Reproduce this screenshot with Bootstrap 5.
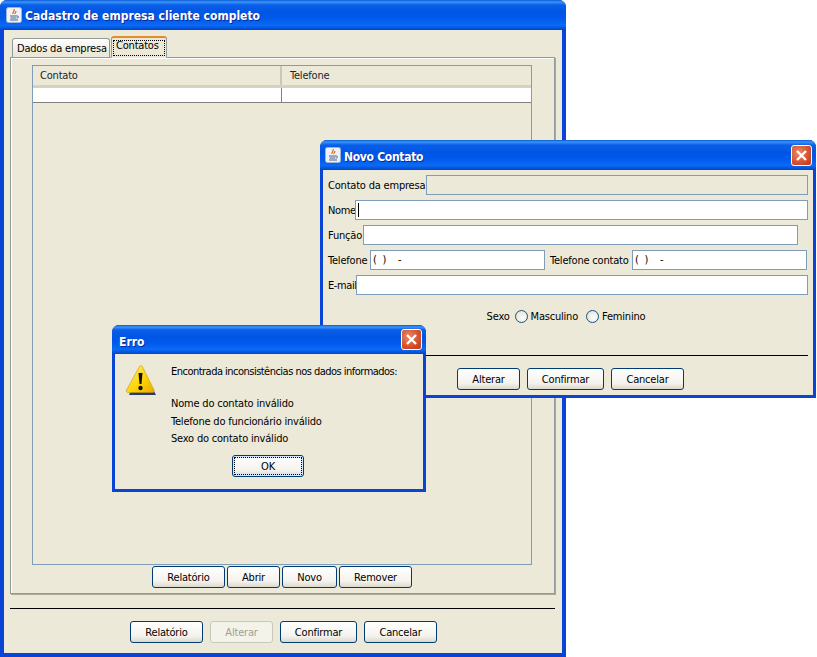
<!DOCTYPE html>
<html lang="pt"><head><meta charset="utf-8"><title>Cadastro</title>
<link href="https://cdn.jsdelivr.net/npm/bootstrap@5.3.0/dist/css/bootstrap.min.css" rel="stylesheet">
<style>
html,body{margin:0;background:#fff;width:817px;height:657px;overflow:hidden}
body{font-family:"DejaVu Sans Condensed","DejaVu Sans",sans-serif;font-stretch:condensed;font-size:11px;line-height:14px;color:#000;letter-spacing:-.2px}
.xpwin{position:absolute;display:flex;flex-direction:column;background:#ece9d8;border-radius:7px 7px 0 0;box-shadow:inset 0 0 0 1px #0831d9;overflow:hidden}
.win-main{left:0;top:0;width:566px;height:657px}
.win-novo{left:320px;top:140px;width:496px;height:258px}
.win-erro{left:112px;top:325px;width:314px;height:167px}
.xptitle{flex:none;display:flex;align-items:center;color:#fff;font:bold 12px/16px "DejaVu Sans Condensed","DejaVu Sans",sans-serif;font-stretch:condensed;letter-spacing:0;text-shadow:1px 1px 0 #0a2a9a;
 background:linear-gradient(180deg,#0a5ad8 0,#3b94f6 2px,#0a5fe8 5px,#0055e5 12px,#0058ea 60%,#0a6af5 85%,#0045c8 100%)}
.win-main .xptitle{height:30px;padding:0 4px 0 6px}
.win-novo .xptitle{height:30px;padding:0 4px 0 5px}
.win-erro .xptitle{height:29px;padding:0 4px 0 7px}
.ttxt{padding-top:3px}
.win-main .ttxt{padding-top:2px}
.win-erro .ttxt{padding-top:5px}
.win-novo .ttxt{letter-spacing:-.3px}
.xptitle svg{flex:none;margin-right:3px}
.xpclose{margin-left:auto;width:21px;height:21px;flex:none;border:1px solid #fff;border-radius:3px;background:radial-gradient(circle at 35% 35%,#e9896a,#d4502c 60%,#b8381c);display:flex;align-items:center;justify-content:center}
.xpclose svg{margin:0}
.xpbody{flex:1;min-height:0;display:flex;flex-direction:column;border:solid #0a44d6;border-width:0 3px 3px}
.win-main .xpbody{border-width:0 4px 4px}
.tabstrip{height:27px;flex:none;padding:0 0 0 8px;display:flex;align-items:flex-end;gap:1px;margin:0;list-style:none}
.tabitem{position:relative;height:19px;width:98px;padding:3px 0 0 4px;white-space:nowrap;background:linear-gradient(#fff,#ece9d8 80%);border:1px solid #919b9c;border-bottom:0;border-radius:3px 3px 0 0}
.tabitem.on{height:22px;width:56px;padding:2px 0 0 1px;background:#ece9d8;border-top:2px solid #e68b2c;margin-bottom:-1px;z-index:2;border-bottom:1px solid #ece9d8}
.tabitem.on span{display:block;width:52px;outline:1px dotted #000;outline-offset:-1px;padding:0 0 0 3px;height:16px;line-height:12px}
.tabpanel{flex:none;margin-left:6px;width:545px;height:537px;border:1px solid #919b9c;box-shadow:1px 1px 0 #aca899,inset 1px 1px 0 #fff;padding:7px 0 0 21px;display:flex;flex-direction:column}
.tblbox{width:500px;height:500px;flex:none;border:1px solid #7f9db9;background:#ece9d8;margin-bottom:1px}
table.jtable{width:498px;margin:0;border-collapse:collapse;table-layout:fixed;font-size:11px}
.jtable th{font-weight:400;height:20px;padding:2px 0 1px 7px;background:#ece9d8;border-bottom:3px solid #d6d2c2;border-right:2px solid #cbc7b8;vertical-align:middle}
.jtable th:first-child{width:248px}
.jtable th:last-child{border-right:0;padding-left:8px}
.jtable td{height:16px;padding:0;background:#fff;border-bottom:1px solid #808080;border-right:1px solid #808080}
.jtable td:last-child{border-right:0}
.btnrow{display:flex;justify-content:center}
.btn.jbtn{flex:none;height:22px;padding:1px 0 0;font-size:11px;letter-spacing:-.2px;line-height:19px;color:#000;border:1px solid #003c74;border-radius:3px;background:linear-gradient(#fff,#f4f3ee 70%,#dcd8cc)}
.btn.jbtn:disabled{opacity:1;color:#a19f91;border-color:#c9c7ba;background:#f4f3ea}
.btn.jbtn.def{outline:1px dotted #000;outline-offset:-3px;box-shadow:inset 0 0 0 2px #cee7ff}
.rule{height:1px;background:#000;flex:none;opacity:1;border:0;margin:0}
.fld{height:20px;background:#fff;border:1px solid #7f9db9;line-height:17px;padding-left:2px;white-space:pre;flex:none;color:#000}
.fld.ro{background:#ece9d8}
.caret{display:inline-block;width:1px;height:14px;background:#000;margin:2px 0 0 0;vertical-align:top}
.frm{padding:5px 5px 0 5px;display:flex;flex-direction:column;gap:5px}
.frow{display:flex;align-items:center;height:20px;white-space:nowrap}
.frow>span{padding-top:1px}
.radio{display:inline-block;flex:none;width:13px;height:13px;border:1px solid #1c5180;border-radius:50%;background:radial-gradient(circle at 60% 60%,#fff,#dcd9cd);margin:-2px 3px 0 5px}
.erro-body{padding:11px 0 0 56px;position:relative}
.warn{position:absolute;left:10px;top:10px}
.w73{width:73px}.w53{width:53px}.w55{width:55px}.w63{width:63px}.w77{width:77px}.w72{width:72px}
.r1{margin:14px 7px 0 6px}
.b1{width:500px;gap:2px}
.b2{margin-top:12px;gap:7px;margin-left:126px;justify-content:flex-start}
.l1{width:98px}.f1{width:382px}.l2{width:27px;letter-spacing:-.4px}.f2{width:453px}.l3{width:35px}.f3{width:435px}
.l4{width:42px}.f4{width:175px}.l5{width:82px;margin-left:5px}.l6{width:28px;letter-spacing:-.4px}.f6{width:452px}
.sexo{margin-top:12px;padding-right:4px}.r2{margin-left:8px}
.r3{margin:28px 5px 0 3px}
.b3{margin-top:12px;gap:7px;margin-left:134px;justify-content:flex-start}
.m1{letter-spacing:-.52px}
.m2{margin-top:18px}.m3{margin-top:3.500px}
.ok{margin-top:9px;padding-right:2px}
</style></head><body>

<section class="xpwin win-main">
 <div class="xptitle"><svg width="16" height="16" viewBox="0 0 16 16"><rect x=".5" y=".5" width="15" height="15" rx="2" fill="#eef1f6" stroke="#9db4d8"/><path d="M8 2c1.500 2-2 3-1 5M10 4c0 1.500-1.500 2-1 3" stroke="#e8661a" stroke-width="1.200" fill="none"/><path d="M4 9h7M4.500 11h6M4 13h8M11 9c2 0 2 2 0 2" stroke="#47648c" fill="none"/></svg><span class="ttxt">Cadastro de empresa cliente completo</span></div>
 <div class="xpbody">
  <ul class="tabstrip">
   <li class="tabitem">Dados da empresa</li>
   <li class="tabitem on"><span>Contatos</span></li>
  </ul>
  <div class="tabpanel">
   <div class="tblbox"><table class="table jtable"><thead><tr><th>Contato</th><th>Telefone</th></tr></thead><tbody><tr><td></td><td></td></tr></tbody></table></div>
   <div class="btnrow b1">
    <button class="btn jbtn w73">Relatório</button><button class="btn jbtn w53">Abrir</button><button class="btn jbtn w55">Novo</button><button class="btn jbtn w73">Remover</button>
   </div>
  </div>
  <hr class="rule r1">
  <div class="btnrow b2">
   <button class="btn jbtn w73">Relatório</button><button class="btn jbtn w63" disabled>Alterar</button><button class="btn jbtn w77">Confirmar</button><button class="btn jbtn w73">Cancelar</button>
  </div>
 </div>
</section>

<section class="xpwin win-novo">
 <div class="xptitle"><svg width="16" height="16" viewBox="0 0 16 16"><rect x=".5" y=".5" width="15" height="15" rx="2" fill="#eef1f6" stroke="#9db4d8"/><path d="M8 2c1.500 2-2 3-1 5M10 4c0 1.500-1.500 2-1 3" stroke="#e8661a" stroke-width="1.200" fill="none"/><path d="M4 9h7M4.500 11h6M4 13h8M11 9c2 0 2 2 0 2" stroke="#47648c" fill="none"/></svg><span class="ttxt">Novo Contato</span>
  <span class="xpclose"><svg width="13" height="13" viewBox="0 0 13 13"><path d="M2 2l9 9M11 2l-9 9" stroke="#fff" stroke-width="2.400"/></svg></span></div>
 <div class="xpbody">
  <div class="frm">
   <div class="frow"><span class="l1">Contato da empresa</span><div class="fld ro f1"></div></div>
   <div class="frow"><span class="l2">Nome</span><div class="fld f2"><i class="caret"></i></div></div>
   <div class="frow"><span class="l3">Função</span><div class="fld f3"></div></div>
   <div class="frow"><span class="l4">Telefone</span><div class="fld f4">(  )    -</div><span class="l5">Telefone contato</span><div class="fld f4">(  )    -</div></div>
   <div class="frow"><span class="l6">E-mail</span><div class="fld f6"></div></div>
  </div>
  <div class="frow justify-content-center sexo">Sexo<i class="radio"></i>Masculino<i class="radio r2"></i>Feminino</div>
  <hr class="rule r3">
  <div class="btnrow b3">
   <button class="btn jbtn w63">Alterar</button><button class="btn jbtn w77">Confirmar</button><button class="btn jbtn w73">Cancelar</button>
  </div>
 </div>
</section>

<section class="xpwin win-erro">
 <div class="xptitle"><span class="ttxt">Erro</span><span class="xpclose"><svg width="13" height="13" viewBox="0 0 13 13"><path d="M2 2l9 9M11 2l-9 9" stroke="#fff" stroke-width="2.400"/></svg></span></div>
 <div class="xpbody">
  <div class="erro-body">
   <svg class="warn" width="32" height="32" viewBox="0 0 32 32"><defs><linearGradient id="w" x1="0" y1="0" x2="1" y2="1"><stop offset="0" stop-color="#fff27a"/><stop offset=".6" stop-color="#fdd200"/><stop offset="1" stop-color="#e8a800"/></linearGradient></defs><path d="M16 3L31 31H4z" fill="#2a3a78"/><path d="M14.500 2.500c1-1 2-1 2.800 0L29 26c.6 1.600 0 2.500-1.500 2.500H3c-1.500 0-2.200-1-1.500-2.500z" fill="url(#w)" stroke="#c89a00" stroke-width=".6"/><path d="M13.500 9h4l-1 11h-2z" fill="#111"/><circle cx="15.500" cy="24" r="2.200" fill="#111"/></svg>
   <div class="m1">Encontrada inconsistências nos dados informados:</div>
   <div class="m2">Nome do contato inválido</div>
   <div class="m3">Telefone do funcionário inválido</div>
   <div class="m3">Sexo do contato inválido</div>
  </div>
  <div class="btnrow ok"><button class="btn jbtn def w72">OK</button></div>
 </div>
</section>
</body></html>
